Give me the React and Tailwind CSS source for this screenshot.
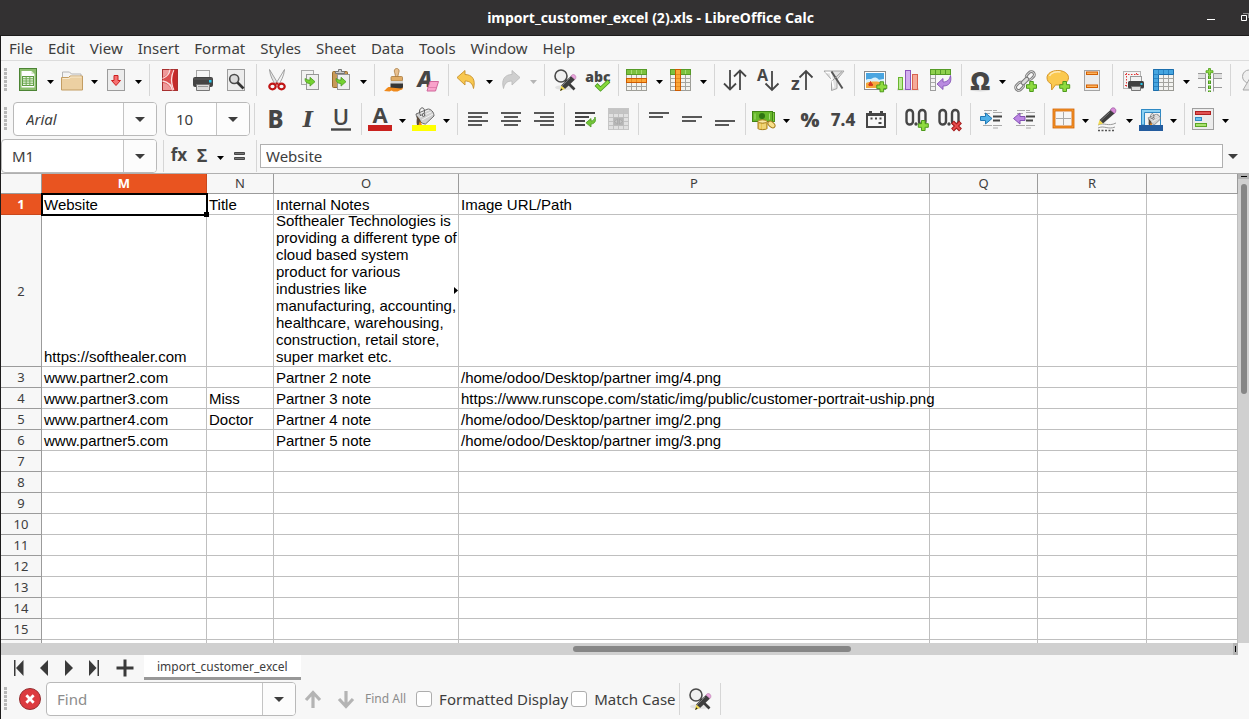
import React from "react";

/* ---------- shared drawing parts ---------- */

function Svg({ children, size = 24, view = "0 0 24 24" }) {
  return (
    <svg width={size} height={size} viewBox={view} fill="none" aria-hidden="true" className="block shrink-0 overflow-visible">
      {children}
    </svg>
  );
}

const INK = "#464646";

function Plus({ x = 18.5, y = 18.5 }) {
  return (
    <g transform={`translate(${x} ${y})`}>
      <path d="M-1.8-5h3.6v3.2h3.2v3.6h-3.2v3.2h-3.6v-3.2h-3.2v-3.6h3.2z" fill="#8fdb3f" stroke="#4d9a1c" />
    </g>
  );
}

function GreenArrow({ x = 0, y = 0 }) {
  return (
    <path
      transform={`translate(${x} ${y})`}
      d="M0 0c0 3.400 1.600 5 5 5v2.600l5-4.400-5-4.400v2.800c-2.200-.1-3.600-.6-5-1.600z"
      fill="#74d130"
      stroke="#4a9a20"
      strokeWidth=".8"
    />
  );
}

function Glyph({ x = 12, y, size, children, italic, weight = 700, family = "Open Sans, Noto Sans, sans-serif" }) {
  return (
    <text x={x} y={y} fontSize={size} fontWeight={weight} fontStyle={italic ? "italic" : "normal"} fontFamily={family} textAnchor="middle" fill={INK}>
      {children}
    </text>
  );
}

function GridLines({ x, y, w, h, cols, rows, color = "#a5a5a0" }) {
  const d = [];
  for (let i = 1; i < cols; i++) d.push(`M${x + (w * i) / cols} ${y}v${h}`);
  for (let i = 1; i < rows; i++) d.push(`M${x} ${y + (h * i) / rows}h${w}`);
  return <path d={d.join("")} stroke={color} />;
}

/* ---------- standard toolbar icons ---------- */

const NewIcon = () => (
  <Svg>
    <rect x="3.5" y=".5" width="17" height="22" fill="#8bbd6d" stroke="#4c8434" />
    <path d="M5.500 3h10l3 3v13.500h-13z" fill="#fff" />
    <path d="M15.500 3v3h3z" fill="#d5e8c8" />
    <rect x="6.500" y="8.500" width="11" height="9" fill="#eaf5e2" stroke="#5e9b42" />
    <GridLines x={6.5} y={8.5} w={11} h={9} cols={3} rows={4} color="#6da851" />
  </Svg>
);
const OpenIcon = () => (
  <Svg>
    <path d="M2.500 20v-16h7l2 2h9.500v14z" fill="#f4f4f4" stroke="#b5b5b5" />
    <path d="M1.500 9.500h7l1.500-1.500h12.500v14h-21z" fill="#ecd0a2" stroke="#c39d63" />
    <path d="M2.500 10.500h7l1-1.500h11" stroke="#f9ebd0" />
  </Svg>
);
const SaveIcon = () => (
  <Svg>
    <rect x="3.500" y="1.500" width="17" height="21" fill="#ececec" stroke="#9c9c9c" />
    <path d="M10 7.500h4v5h2.500l-4.500 5-4.500-5h2.500z" fill="#f57070" stroke="#cc1f1f" />
  </Svg>
);
const PdfIcon = () => (
  <Svg>
    <rect x="4.500" y="1.500" width="15" height="21" fill="#dc5050" stroke="#a83030" />
    <path d="M5 2h6.500c-.5 3-3 5.500-6.500 7z" fill="#ee9a9a" />
    <path d="M5 15c4 0 7 3 8.500 7h-8.500z" fill="#ee9a9a" />
    <path d="M4.500 10.500c5-2 7-5 7.500-9M4.500 13c6 1 9 4 10 9.500M16 2c-3.500 7-3.500 13 0 20" stroke="#fbe0e0" strokeWidth="1.300" />
    <path d="M16.500 2h2.500v20h-2.500c-2.500-6-2.500-14 0-20z" fill="#c42a2a" />
  </Svg>
);
const PrinterIcon = () => (
  <Svg>
    <rect x="5.500" y="2.500" width="13" height="9" fill="#f5f5f5" stroke="#a5a5a5" />
    <rect x="2" y="9" width="20" height="10" rx="2" fill="#444" />
    <path d="M3 11h18" stroke="#5f5f5f" />
    <rect x="18" y="12" width="2.500" height="2.500" fill="#29c8ee" />
    <path d="M5.500 16.500h13v6h-13z" fill="#ddd" stroke="#777" />
    <path d="M7 18.500h10" stroke="#999" />
  </Svg>
);
const PreviewIcon = () => (
  <Svg>
    <rect x="3.500" y="1.500" width="17" height="21" fill="#ececec" stroke="#9c9c9c" />
    <circle cx="10.200" cy="11" r="4.500" fill="#dadada" stroke="#4a4a4a" strokeWidth="1.600" />
    <path d="M13.500 14.500l6 6" stroke="#333" strokeWidth="2.600" />
  </Svg>
);
const CutIcon = () => (
  <Svg>
    <path d="M4.500 1.500l8.500 14-2.500 1.500c-2.500-4-5.500-9-6-15.500z" fill="#e4e4e4" stroke="#8d8d8d" strokeWidth=".8" />
    <path d="M19.500 1.500l-8.500 14 2.500 1.500c2.500-4 5.500-9 6-15.500z" fill="#f4f4f4" stroke="#8d8d8d" strokeWidth=".8" />
    <ellipse cx="7.500" cy="18.500" rx="3.200" ry="2.800" stroke="#c01515" strokeWidth="2.200" />
    <ellipse cx="16.500" cy="18.500" rx="3.200" ry="2.800" stroke="#c01515" strokeWidth="2.200" />
    <path d="M10.500 15.500h3" stroke="#c01515" strokeWidth="2" />
  </Svg>
);
const CopyIcon = () => (
  <Svg>
    <rect x="3.500" y="2.500" width="12" height="14" fill="#f2f2f2" stroke="#a9a9a9" />
    <rect x="8.500" y="6.500" width="12" height="15" fill="#efefef" stroke="#979797" />
    <GreenArrow x={7} y={10.5} />
  </Svg>
);
const PasteIcon = () => (
  <Svg>
    <rect x="3.500" y="3.500" width="15" height="16" rx="1" fill="#c89a58" stroke="#966c2e" />
    <path d="M6.500 5.500v-2h3v-2h3v2h3v2z" fill="#ccc" stroke="#777" />
    <rect x="8.500" y="6.500" width="12" height="15" fill="#efefef" stroke="#979797" />
    <GreenArrow x={7} y={10.5} />
  </Svg>
);
const BrushIcon = () => (
  <Svg>
    <path d="M1 23c2-1 2-3 4.500-4h14c1 1 0 3-2 3l-3 1.500h-4l-2-1-2 1z" fill="#f08a1c" />
    <path d="M12.300 9c.5-2-1-4.500-1-6 0-1.500 1-2.500 2.400-2.500s2.400 1 2.400 2.500c0 1.500-1.500 4-1 6z" fill="#e8c090" stroke="#a8783c" strokeWidth=".8" />
    <rect x="8" y="8.500" width="11.500" height="4.500" rx="1" fill="#e0ac66" stroke="#a8783c" strokeWidth=".8" />
    <rect x="7.500" y="13" width="12.500" height="2.800" fill="#d5d5d5" />
    <path d="M7.500 15.500h12.500v4l-2 1-10.500-1z" fill="#353535" />
  </Svg>
);
const ClearIcon = () => (
  <Svg>
    <Glyph x={9} y={19} size={22} italic weight={800}>A</Glyph>
    <path d="M14 13.500h8.500l-3 9.500h-8.500z" fill="#f9a3cb" stroke="#d0679b" />
    <path d="M11.500 19.500h8.500" stroke="#e27fae" />
  </Svg>
);
const UndoIcon = () => (
  <Svg>
    <path d="M2 9.500l8-7v4c7 0 11 5 8.500 14-1-5-3.500-7.500-8.500-7.500v4z" fill="#f8c850" stroke="#c7912a" strokeWidth=".9" />
  </Svg>
);
const RedoIcon = () => (
  <Svg>
    <path d="M21 9.500l-8-7v4c-7 0-11 5-8.500 14 1-5 3.500-7.500 8.500-7.500v4z" fill="#cfcfcf" stroke="#bcbcbc" strokeWidth=".9" />
  </Svg>
);
const FindReplaceIcon = () => (
  <Svg>
    <ellipse cx="12" cy="19.500" rx="10" ry="2.500" fill="#e2e2e2" />
    <circle cx="8" cy="8" r="6" fill="#f0f0f0" stroke="#4a4a4a" strokeWidth="1.600" />
    <path d="M12.500 12.500l9 9" stroke="#3b3b3b" strokeWidth="2.600" />
    <path d="M18 8l4 3.500-10 9.500-4-3.500z" fill="#3e3e3e" />
    <path d="M17 10l-8 8" stroke="#777" />
    <path d="M8.200 17.500l3.800 3.500-5 2z" fill="#f0d84c" />
    <path d="M7 23l1.200-2.800 1.500 1.600z" fill="#222" />
    <path d="M18 8c1-1.500 2.500-2 4-.8 1.200 1.200 1.200 3 0 4.300z" fill="#eaa4dd" stroke="#b573a8" strokeWidth=".6" />
  </Svg>
);
const SpellIcon = () => (
  <Svg>
    <Glyph x={12} y={14} size={14} weight={800}>abc</Glyph>
    <path d="M10 16.500l4.500 4.500 8.500-8" stroke="#4a9a20" strokeWidth="4" />
    <path d="M10.500 17l4 4 8-7.500" stroke="#86d93a" strokeWidth="2.400" />
  </Svg>
);
const RowIcon = () => (
  <Svg>
    <rect x="1.500" y="1.500" width="20" height="21" fill="#f3f3ef" stroke="#9e9e98" />
    <GridLines x={1.5} y={6.5} w={20} h={16} cols={4} rows={4} />
    <rect x="1.500" y="1.500" width="20" height="5" fill="#7cc13e" stroke="#569b27" />
    <path d="M6.500 2v4M11.500 2v4M16.500 2v4" stroke="#a5dc74" />
    <rect x="1.500" y="10.500" width="20" height="4" fill="#fca637" stroke="#cf5c00" />
    <path d="M6.500 11v3M11.500 11v3M16.500 11v3" stroke="#e58a20" />
  </Svg>
);
const ColumnIcon = () => (
  <Svg>
    <rect x="1.500" y="1.500" width="20" height="21" fill="#f3f3ef" stroke="#9e9e98" />
    <GridLines x={1.5} y={6.5} w={20} h={16} cols={4} rows={4} />
    <rect x="1.500" y="1.500" width="20" height="5" fill="#7cc13e" stroke="#569b27" />
    <path d="M16.500 2v4" stroke="#a5dc74" />
    <rect x="6.500" y="1.500" width="5" height="21" fill="#fca637" stroke="#cf5c00" />
    <path d="M7 6.500h4M7 10.500h4M7 14.500h4M7 18.500h4" stroke="#e58a20" />
  </Svg>
);
const SortIcon = () => (
  <Svg>
    <path d="M7 2v19M1 15.500l6 6 6-6M17 22v-19M11 8.500l6-6 6 6" stroke={INK} strokeWidth="1.800" />
  </Svg>
);
const SortAscIcon = () => (
  <Svg>
    <Glyph x={6.5} y={12.5} size={16}>A</Glyph>
    <path d="M16 3v19M9.500 15.500l6.500 6.500 6.500-6.500" stroke={INK} strokeWidth="1.800" />
  </Svg>
);
const SortDescIcon = () => (
  <Svg>
    <Glyph x={6.5} y={21.5} size={18}>z</Glyph>
    <path d="M17 22v-19M10.500 9.500l6.500-6.500 6.500 6.500" stroke={INK} strokeWidth="1.800" />
  </Svg>
);
const FilterIcon = () => (
  <Svg>
    <path d="M2 3h20l-7 8.500v9l-5.500 2v-11z" fill="#e3e3e3" stroke="#a6a6a6" />
    <path d="M3.500 4.500h5l3 15" stroke="#fff" strokeWidth="1.600" />
    <path d="M9.500 3.500l11 17" stroke="#555" strokeWidth="2" />
    <path d="M20 3.500l-9.500 9" stroke="#999" />
  </Svg>
);
const ImageIcon = () => (
  <Svg>
    <rect x="1.500" y="3.500" width="21" height="18" fill="#fff" stroke="#8b8b8b" />
    <rect x="3" y="5" width="18" height="15" fill="#4aa5e0" />
    <path d="M3 12c2-2 4 0 6-1.500s5-1 6 .5 4 0 6 0v4h-18z" fill="#d8f0fb" />
    <path d="M3 15c5-2 12-2 18 0v5h-18z" fill="#f4a83c" />
    <path d="M7.500 13.500l1.500 3h-3zM6 16h3.500v1.500h-3.500z" fill="#d93a1c" stroke="#d93a1c" />
    <Plus x={18.8} y={18.8} />
  </Svg>
);
const ChartIcon = () => (
  <Svg>
    <path d="M1 21.500h22" stroke="#d8d8d8" strokeWidth="2" />
    <rect x="2.500" y="9.500" width="4" height="12" fill="#bdea97" stroke="#69b52f" />
    <rect x="9.500" y="2.500" width="5" height="19" fill="#d2aeee" stroke="#8d55bd" />
    <rect x="16.500" y="6.500" width="5" height="15" fill="#f5aa9a" stroke="#d9634f" />
  </Svg>
);
const PivotIcon = () => (
  <Svg>
    <rect x="1.500" y="6.500" width="5" height="16" fill="#f3f3f3" stroke="#9e9e9e" />
    <path d="M2 10.500h4M2 14.500h4M2 18.500h4" stroke="#aaa" />
    <rect x="1.500" y="1.500" width="20" height="5" fill="#8fd14e" stroke="#569b27" />
    <path d="M6.500 2v4M11.500 2v4M16.500 2v4" stroke="#569b27" />
    <path d="M21.500 7.500c1.500 7-1.500 10.500-7.500 10.500v3.500l-6-5.500 6-5.500v3.500c4 0 6.500-2 7.500-6.500z" fill="#b98be0" stroke="#8553b5" strokeWidth=".9" />
  </Svg>
);
const OmegaIcon = () => (
  <Svg>
    <ellipse cx="12" cy="22" rx="10" ry="1.500" fill="#dcdcdc" />
    <Glyph x={12.3} y={22} size={25} weight={800}>Ω</Glyph>
  </Svg>
);
const LinkIcon = () => (
  <Svg>
    <g transform="rotate(-45 11 13)">
      <rect x="-1" y="10" width="9" height="6" rx="3" stroke="#777" strokeWidth="2.800" />
      <rect x="-1" y="10" width="9" height="6" rx="3" stroke="#d5d5d5" />
      <rect x="14" y="10" width="9" height="6" rx="3" stroke="#777" strokeWidth="2.800" />
      <rect x="14" y="10" width="9" height="6" rx="3" stroke="#d5d5d5" />
      <rect x="6.500" y="11" width="9" height="4" rx="2" fill="#ddd" stroke="#777" />
    </g>
    <Plus x={17.5} y={18.5} />
  </Svg>
);
const CommentIcon = () => (
  <Svg>
    <path d="M10.800 2.500c6 0 10.700 3 10.700 7.200 0 4.300-4.700 7.300-10.700 7.300l-2.300-.1-3.800 5.100-.3-6c-2.700-1.200-4.400-3.500-4.400-6.300 0-4.200 4.800-7.200 10.800-7.200z" fill="#fbc94f" stroke="#d4962a" />
    <path d="M2.500 8c1.500-3.500 7-5 11-4" stroke="#fdeab8" strokeWidth="1.500" />
    <Plus x={17.7} y={18.5} />
  </Svg>
);
const HeaderFooterIcon = () => (
  <Svg>
    <rect x="4.500" y="2.500" width="15" height="20" fill="#ebebeb" stroke="#a3a3a3" />
    <rect x="6.500" y="4" width="11" height="2.500" fill="#fdb35c" stroke="#d35f00" />
    <rect x="6.500" y="17" width="11" height="2.500" fill="#fdb35c" stroke="#d35f00" />
  </Svg>
);
const PrintAreaIcon = () => (
  <Svg>
    <rect x="2.500" y="3.500" width="17" height="17" fill="#f4f4f4" stroke="#b3b3b3" />
    <path d="M4 6.500h14M5.500 5v15M15.500 5v7M4 17.500h4" stroke="#e23636" strokeDasharray="1.500 1.500" />
    <rect x="9.500" y="8.500" width="11" height="6" fill="#f3f3f3" stroke="#999" />
    <rect x="7" y="13" width="16" height="7.500" rx="1.500" fill="#404040" />
    <rect x="19.500" y="15" width="2" height="2" fill="#29c8ee" />
    <path d="M10.500 18.500h9v4h-9z" fill="#ddd" stroke="#777" />
  </Svg>
);
const FreezeIcon = () => (
  <Svg>
    <rect x="1.500" y="1.500" width="20" height="21" fill="#f4f4f1" stroke="#9a9a94" />
    <GridLines x={6.5} y={6.5} w={15} h={16} cols={3} rows={4} />
    <path d="M1.500 1.500h20v5h-15v16h-5z" fill="#46a6e0" stroke="#1b6fae" />
    <path d="M6.500 2v4M11.500 2v4M16.500 2v4M2 6.500h4M2 10.500h4M2 14.500h4M2 18.500h4" stroke="#2b83c2" />
  </Svg>
);
const SplitIcon = () => (
  <Svg>
    <path d="M0 6h7v4h-7zM16 6h8v4h-8z" fill="#e0e0e0" />
    <path d="M0 5.500h7.500v18M24 5.500h-8.500v18M7.500 10.500h-7.500M15.500 10.500h8.500M0 19.500h7M16 19.500h8" stroke="#999" />
    <path d="M11.500 7.500v16.500" stroke="#4a9a20" strokeWidth="3" strokeDasharray="3.500 1.500" />
    <path d="M11.500 8v16" stroke="#8bd548" strokeDasharray="2.500 2.500" />
    <path d="M10.500.5h2v2.200h2.500v2h-2.500v2.300h-2v-2.300h-2.500v-2h2.500z" fill="#8fdb3f" stroke="#4d9a1c" strokeWidth=".8" />
  </Svg>
);
const ShapesIcon = () => (
  <Svg>
    <circle cx="10" cy="8.500" r="6.500" fill="#efefef" stroke="#a8a8a8" />
    <path d="M4 22l7-12 7 12z" fill="#e6e6e6" stroke="#a8a8a8" />
  </Svg>
);

/* ---------- formatting toolbar icons ---------- */

const BoldIcon = () => <Svg><Glyph x={12.5} y={21} size={24} weight={800} family="Noto Sans, sans-serif">B</Glyph></Svg>;
const ItalicIcon = () => <Svg><Glyph y={20} size={22} italic family="DejaVu Serif, serif" weight={700}>I</Glyph></Svg>;
const UnderlineIcon = () => (
  <Svg>
    <Glyph y={18} size={22} weight={600}>U</Glyph>
    <path d="M2 22.500h20" stroke={INK} strokeWidth="2.400" />
  </Svg>
);
const FontColorIcon = () => (
  <Svg>
    <Glyph y={16} size={22}>A</Glyph>
    <path d="M0 18h24v6h-24z" fill="#c9211e" />
  </Svg>
);
const Bucket = () => (
  <g>
    <path d="M4 7l12-5c3 0 6 3 6 7l-8.500 8c-4 0-9-5-9.500-10z" fill="#cfcfcf" stroke="#6b6b6b" />
    <path d="M7 7l10-4M8 10l11-5M10 13l11-6" stroke="#f4f4f4" />
    <path d="M9 9c-3-4-1-9 2-8 2 1 2 5 0 7" stroke="#555" />
    <circle cx="11.500" cy="8" r="1.400" fill="#eee" stroke="#555" />
    <path d="M5 9c2 2 5 5 4 9h-4c-1-3 0-6 0-9z" fill="#5b4a3a" />
    <path d="M6.500 18l1.500-4 2 4z" fill="#f08a1c" />
  </g>
);
const HighlightIcon = () => (
  <Svg>
    <Bucket />
    <path d="M0 18h24v6h-24z" fill="#ffff00" />
  </Svg>
);
function Lines({ rows }) {
  return (
    <Svg>
      {rows.map(([x, y, w]) => (
        <path key={y} d={`M${x} ${y}h${w}`} stroke={INK} strokeWidth="1.800" />
      ))}
    </Svg>
  );
}
const AlignLeftIcon = () => <Lines rows={[[2, 6, 20], [2, 10, 14], [2, 14, 20], [2, 18, 14]]} />;
const AlignCenterIcon = () => <Lines rows={[[2, 6, 20], [5, 10, 14], [2, 14, 20], [5, 18, 14]]} />;
const AlignRightIcon = () => <Lines rows={[[2, 6, 20], [8, 10, 14], [2, 14, 20], [8, 18, 14]]} />;
const AlignTopIcon = () => <Lines rows={[[2, 6, 20], [2, 10, 14]]} />;
const AlignMiddleIcon = () => <Lines rows={[[2, 10, 20], [2, 14, 14]]} />;
const AlignBottomIcon = () => <Lines rows={[[2, 14, 20], [2, 18, 14]]} />;
const WrapIcon = () => (
  <Svg>
    <path d="M2 6h20M2 10h14M2 14h10M2 18h10" stroke={INK} strokeWidth="1.800" />
    <path d="M22 10c1.500 4-.5 7-4 7v3l-5-4.200 5-4.300v2.500c2 0 3.500-1.500 4-4z" fill="#74c53a" stroke="#4a9a20" strokeWidth=".8" />
  </Svg>
);
const MergeIcon = () => (
  <Svg>
    <rect x="2.500" y="1.500" width="20" height="21" fill="#e0e0e0" stroke="#c6c6c6" />
    <path d="M3 2h19v4h-19z" fill="#c4c4c4" />
    <GridLines x={2.5} y={2.5} w={20} h={20} cols={4} rows={5} color="#c2c2c2" />
    <rect x="7.500" y="10.500" width="10" height="8" fill="#b5b5b5" />
    <path d="M11.500 12v5l-3-2.500zM13.500 12v5l3-2.500z" fill="#c6c6c6" stroke="#a2a2a2" strokeWidth=".6" />
  </Svg>
);
const MoneyIcon = () => (
  <Svg>
    <rect x="3.500" y="5.500" width="19" height="9" fill="#7fcd3e" stroke="#4a8f1c" />
    <rect x=".5" y="4.500" width="20" height="10" fill="#66b82a" stroke="#428517" />
    <circle cx="10" cy="9" r="3" fill="#2f7512" />
    <path d="M3 6.500v6M17.500 6.500v6" stroke="#a6df77" />
    <ellipse cx="19.500" cy="17.500" rx="4" ry="2.600" transform="rotate(40 19.500 17.500)" fill="#f8e08a" stroke="#a67c1c" />
    <path d="M6 14.500v7c0 1.500 9 1.500 9 0v-7z" fill="#e9c34f" stroke="#a67c1c" />
    <ellipse cx="10.500" cy="14.500" rx="4.500" ry="1.700" fill="#fbeaa6" stroke="#a67c1c" />
    <path d="M8 16.500v5M11 17v5M13 16.500v5" stroke="#f8e59b" />
  </Svg>
);
const PercentIcon = () => <Svg><Glyph y={20} size={20} weight={800}>%</Glyph></Svg>;
const NumberIcon = () => <Svg><Glyph y={19} size={17} weight={800} family="Noto Sans, sans-serif">7.4</Glyph></Svg>;
const DateIcon = () => (
  <Svg>
    <path d="M2 6h3v-2h3v2h8v-2h3v2h3v15h-20z" fill={INK} />
    <rect x="4" y="9" width="16" height="10" fill="#f7f7f7" />
    <path d="M6.500 11.500h2M11 11.500h2M15.500 11.500h2M6.500 15.500M14.500 16h3" stroke={INK} strokeWidth="2" />
  </Svg>
);
const Decimal = ({ children }) => (
  <Svg>
    <rect x="1.500" y="3" width="6.500" height="14.500" rx="3.200" stroke={INK} strokeWidth="2.400" />
    <circle cx="11" cy="17" r="1.700" fill={INK} />
    <rect x="14" y="3" width="6.500" height="14.500" rx="3.200" stroke={INK} strokeWidth="2.400" />
    {children}
  </Svg>
);
const AddDecimalIcon = () => <Decimal><Plus x={18.3} y={18.5} /></Decimal>;
const DelDecimalIcon = () => (
  <Decimal>
    <path d="M14.500 15l8 8M22.500 15l-8 8" stroke="#a31818" strokeWidth="4" />
    <path d="M15 15.500l7 7M22 15.500l-7 7" stroke="#e64b4b" strokeWidth="2" />
  </Decimal>
);
const IndentIcon = () => (
  <Svg>
    <path d="M5 3.500h8M14 3.500h4M5 6.500h6M14 5.500h9M4 18.500h9M14 18.500h9M14 21h5" stroke="#aaa" />
    <path d="M14 9.500h9M14 13.500h7" stroke={INK} strokeWidth="2" />
    <path d="M1.500 9.500h5v-3.500l6.500 5.500-6.500 5.500v-3.500h-5z" fill="#51b1e8" stroke="#1f78b5" />
  </Svg>
);
const OutdentIcon = () => (
  <Svg>
    <path d="M5 3.500h8M14 3.500h4M5 6.500h6M14 5.500h9M4 18.500h9M14 18.500h9M14 21h5" stroke="#aaa" />
    <path d="M14 9.500h9M14 13.500h7" stroke={INK} strokeWidth="2" />
    <path d="M13 9.500h-5v-3.500l-6.500 5.500 6.500 5.500v-3.500h5z" fill="#bd86e4" stroke="#8350b3" />
  </Svg>
);
const BorderIcon = () => (
  <Svg>
    <rect x="3" y="3" width="19" height="17" fill="#f6f6f6" stroke="#d35f00" strokeWidth="2.800" />
    <rect x="3" y="3" width="19" height="17" stroke="#fca637" />
    <path d="M12.500 5v13M5 11.500h15" stroke="#aaa" />
  </Svg>
);
const BorderStyleIcon = () => (
  <Svg>
    <path d="M3 18c6-3 10 2 18-2M3 21c6-3 10 2 17-1" stroke="#999" />
    <path d="M3 23.500h16" stroke="#555" strokeWidth="1.500" strokeDasharray="2 1.500" />
    <path d="M15.500 3l4 3.500-11.500 10-3.500-3.500z" fill="#3f3f3f" />
    <path d="M14.500 5.500l-8.500 8" stroke="#777" />
    <path d="M4.500 13l3.500 3.500-5 1.500z" fill="#f0d84c" />
    <path d="M15.500 3c.8-2 2.500-3 4.500-1.500 1.500 1.500 1 3.500-.5 5z" fill="#d98ad8" stroke="#92519a" strokeWidth=".7" />
  </Svg>
);
const BorderColorIcon = () => (
  <Svg>
    <path d="M2.500 18v-15.500h19v15.500" fill="#f3f3f3" stroke="#2f89c4" />
    <path d="M2.500 2.500h19v3h-16v12.500h-3z" fill="#8bd0f2" stroke="#2f89c4" />
    <g transform="translate(6.500 6) scale(.68)"><Bucket /></g>
    <path d="M0 18h24v6h-24z" fill="#245c9e" />
  </Svg>
);
const ConditionalIcon = () => (
  <Svg>
    <rect x="1.500" y="1.500" width="21" height="21" fill="#ececec" stroke="#9f9f9f" />
    <rect x="4.500" y="4.500" width="15" height="3" fill="#e05252" stroke="#b02020" />
    <rect x="4.500" y="10.500" width="6" height="3" fill="#6dc0ec" stroke="#2f89c4" />
    <rect x="4.500" y="16.500" width="11" height="3" fill="#a8e26c" stroke="#5ca528" />
  </Svg>
);

/* ---------- toolbar widgets ---------- */

function Caret({ muted, large }) {
  return (
    <svg width={large ? 10 : 7} height={large ? 5 : 4} viewBox="0 0 10 5" preserveAspectRatio="none" aria-hidden="true" className="block">
      <path d="M0 0h10l-5 5z" fill={muted ? "#b5b5b5" : large ? "#3d3d3d" : "#000"} />
    </svg>
  );
}

function Tool({ label, icon: Icon, disabled }) {
  return (
    <button type="button" aria-label={label} disabled={disabled} className="flex h-8 w-[33px] shrink-0 items-center justify-center">
      <Icon />
    </button>
  );
}

function SplitTool({ label, icon: Icon, disabled }) {
  return (
    <div className="flex h-8 w-11 shrink-0">
      <button type="button" aria-label={label} disabled={disabled} className="flex w-[30px] items-center justify-center">
        <Icon />
      </button>
      <button type="button" aria-label={`${label} options`} disabled={disabled} className="flex w-3.5 items-center justify-center pt-1">
        <Caret muted={disabled} />
      </button>
    </div>
  );
}

function Sep() {
  return (
    <div className="flex h-8 w-2 shrink-0 justify-center">
      <div className="w-px bg-[#d6d6d6]" />
    </div>
  );
}

function Grip() {
  return (
    <div className="ml-[3px] h-6 w-[3px] shrink-0 bg-[repeating-linear-gradient(#b8b8b8_0_3px,transparent_3px_4px)]" />
  );
}

function renderTools(tools) {
  return tools.map((t, i) => {
    if (t === "|") return <Sep key={i} />;
    const [kind, label, icon, disabled] = t;
    const Kind = kind === "s" ? SplitTool : Tool;
    return <Kind key={i} label={label} icon={icon} disabled={disabled} />;
  });
}

const standardTools = [
  ["s", "New", NewIcon], ["s", "Open", OpenIcon], ["s", "Save", SaveIcon], "|",
  ["p", "Export as PDF", PdfIcon], ["p", "Print", PrinterIcon], ["p", "Print Preview", PreviewIcon], "|",
  ["p", "Cut", CutIcon], ["p", "Copy", CopyIcon], ["s", "Paste", PasteIcon], "|",
  ["p", "Clone Formatting", BrushIcon], ["p", "Clear Formatting", ClearIcon], "|",
  ["s", "Undo", UndoIcon], ["s", "Redo", RedoIcon, true], "|",
  ["p", "Find and Replace", FindReplaceIcon], ["p", "Spelling", SpellIcon], "|",
  ["s", "Row", RowIcon], ["s", "Column", ColumnIcon], "|",
  ["p", "Sort", SortIcon], ["p", "Sort Ascending", SortAscIcon], ["p", "Sort Descending", SortDescIcon], ["p", "AutoFilter", FilterIcon], "|",
  ["p", "Insert Image", ImageIcon], ["p", "Insert Chart", ChartIcon], ["p", "Pivot Table", PivotIcon], "|",
  ["s", "Special Character", OmegaIcon], ["p", "Hyperlink", LinkIcon], ["p", "Comment", CommentIcon], ["p", "Headers and Footers", HeaderFooterIcon], "|",
  ["p", "Print Area", PrintAreaIcon], ["s", "Freeze", FreezeIcon], ["p", "Split Window", SplitIcon], "|",
  ["p", "Draw Functions", ShapesIcon],
];

const formatTools = [
  "|", ["p", "Bold", BoldIcon], ["p", "Italic", ItalicIcon], ["p", "Underline", UnderlineIcon], "|",
  ["s", "Font Color", FontColorIcon], ["s", "Background Color", HighlightIcon], "|",
  ["p", "Align Left", AlignLeftIcon], ["p", "Center", AlignCenterIcon], ["p", "Align Right", AlignRightIcon], "|",
  ["p", "Wrap Text", WrapIcon], ["p", "Merge Cells", MergeIcon, true], "|",
  ["p", "Align Top", AlignTopIcon], ["p", "Center Vertically", AlignMiddleIcon], ["p", "Align Bottom", AlignBottomIcon], "|",
  ["s", "Currency", MoneyIcon], ["p", "Percent", PercentIcon], ["p", "Number", NumberIcon], ["p", "Date", DateIcon], "|",
  ["p", "Add Decimal Place", AddDecimalIcon], ["p", "Delete Decimal Place", DelDecimalIcon], "|",
  ["p", "Increase Indent", IndentIcon], ["p", "Decrease Indent", OutdentIcon], "|",
  ["s", "Borders", BorderIcon], ["s", "Border Style", BorderStyleIcon], ["s", "Border Color", BorderColorIcon], "|",
  ["s", "Conditional", ConditionalIcon],
];

function Combo({ label, value, placeholder, className, inputClass = "" }) {
  return (
    <div className={`flex h-[34px] shrink-0 overflow-hidden rounded border border-[#b9b9b9] bg-white ${className}`}>
      <input
        aria-label={label}
        defaultValue={value}
        placeholder={placeholder}
        className={`min-w-0 flex-1 bg-transparent text-[15px] text-[#3d3d3d] outline-none placeholder:text-[#8c8c8c] ${inputClass}`}
      />
      <button type="button" aria-label={`${label} list`} className="flex w-[33px] items-center justify-center border-l border-[#c4c4c4] bg-[#fcfcfc]">
        <Caret large />
      </button>
    </div>
  );
}

/* ---------- sheet ---------- */

const menus = ["File", "Edit", "View", "Insert", "Format", "Styles", "Sheet", "Data", "Tools", "Window", "Help"];
const columns = ["M", "N", "O", "P", "Q", "R", ""];

const notes =
  "Softhealer Technologies is providing a different type of cloud based system product for various industries like manufacturing, accounting, healthcare, warehousing, construction, retail store, super market etc.";

const data = [
  ["Website", "Title", "Internal Notes", "Image URL/Path"],
  ["https://softhealer.com", "", notes, ""],
  ["www.partner2.com", "", "Partner 2 note", "/home/odoo/Desktop/partner img/4.png"],
  ["www.partner3.com", "Miss", "Partner 3 note", "https://www.runscope.com/static/img/public/customer-portrait-uship.png"],
  ["www.partner4.com", "Doctor", "Partner 4 note", "/home/odoo/Desktop/partner img/2.png"],
  ["www.partner5.com", "", "Partner 5 note", "/home/odoo/Desktop/partner img/3.png"],
];
const rows = Array.from({ length: 16 }, (_, i) => data[i] || []);

function Sheet() {
  return (
    <table className="w-full table-fixed border-separate border-spacing-0">
      <colgroup>
        <col className="w-[41px]" />
        <col className="w-[165px]" />
        <col className="w-[67px]" />
        <col className="w-[185px]" />
        <col className="w-[471px]" />
        <col className="w-[108px]" />
        <col className="w-[109px]" />
        <col />
      </colgroup>
      <thead>
        <tr className="h-5">
          <td className="border-r border-b border-[#9b9b9b] bg-[#f7f7f7] p-0" />
          {columns.map((c, i) => (
            <th
              key={i}
              scope="col"
              className={`border-r border-b p-0 text-[13px] leading-[19px] ${
                i === 0 ? "border-[#c9481d] bg-[#e95420] font-bold text-white" : "border-[#9b9b9b] bg-[#f7f7f7] font-normal text-[#3d3d3d]"
              }`}
            >
              {c}
            </th>
          ))}
        </tr>
      </thead>
      <tbody className="font-['Liberation_Sans',Arial,sans-serif] text-[15px] leading-[17px] text-black">
        {rows.map((row, r) => (
          <tr key={r} className={r === 1 ? "h-[152px]" : "h-[21px]"}>
            <th
              scope="row"
              className={`border-r border-b p-0 font-['Noto_Sans',sans-serif] text-[13px] leading-5 ${
                r === 0 ? "border-[#c9481d] bg-[#e95420] font-bold text-white" : "border-[#9b9b9b] bg-[#f7f7f7] font-normal text-[#3d3d3d]"
              }`}
            >
              {r + 1}
            </th>
            {columns.map((_, c) => {
              const text = row[c];
              const active = r === 0 && c === 0;
              return (
                <td
                  key={c}
                  className={`relative border-r border-b border-[#bfbfbf] py-0 pl-0.5 align-bottom ${
                    active ? "outline-2 -outline-offset-1 outline-black" : ""
                  }`}
                >
                  {r === 1 && c === 2 ? (
                    <>
                      <div className="flex h-[151px] items-end pb-px">{text}</div>
                      <svg width="4" height="7" viewBox="0 0 4 7" aria-hidden="true" className="absolute top-[72px] right-0">
                        <path d="M0 0v7l4-3.500z" fill="#000" />
                      </svg>
                    </>
                  ) : (
                    <div className="whitespace-nowrap pb-px">{text}</div>
                  )}
                  {active && <span className="absolute -right-[3px] -bottom-[3px] z-10 size-[5px] bg-black" />}
                </td>
              );
            })}
          </tr>
        ))}
      </tbody>
    </table>
  );
}

function NavButton({ label, d }) {
  return (
    <button type="button" aria-label={label} className="flex h-6 w-[25px] items-center justify-center">
      <svg width="24" height="24" viewBox="0 0 24 24" aria-hidden="true">
        <path d={d} fill="#3a3a3a" />
      </svg>
    </button>
  );
}

function FindArrow({ label, d }) {
  return (
    <button type="button" aria-label={label} disabled className="flex h-8 w-[33px] shrink-0 items-center justify-center">
      <Svg>
        <path d={d} stroke="#b4b4b4" strokeWidth="3.200" />
      </Svg>
    </button>
  );
}

/* ---------- window ---------- */

export default function App() {
  return (
    <div className="flex h-screen w-full flex-col overflow-hidden bg-[#f7f7f7] font-['Noto_Sans',sans-serif] text-[15px] text-[#3d3d3d]">
      <header className="flex h-9 shrink-0 items-center border-b border-[#1d1c1c] bg-[#333132] pl-24 text-white">
        <h1 className="flex-1 text-center text-sm font-bold">import_customer_excel (2).xls - LibreOffice Calc</h1>
        <div className="flex shrink-0 items-center gap-6">
          <button type="button" aria-label="Minimize" className="flex h-6 w-3 items-center justify-center pt-1">
            <span className="h-px w-2 bg-white" />
          </button>
          <button type="button" aria-label="Restore" className="flex h-6 w-2 items-center">
            <svg width="8" height="9" viewBox="0 0 8 9" aria-hidden="true" className="block">
              <path d="M2 .5h6M7.500 0v5" fill="none" stroke="#8c8b8b" />
              <path d="M.5 2.500h5v5h-5z" fill="none" stroke="#fff" />
            </svg>
          </button>
        </div>
      </header>

      <div className="flex min-h-0 flex-1 flex-col border-l border-[#1d1c1c]">
        <nav className="flex h-[25px] shrink-0 items-center gap-[15px] border-b border-[#dcdcdc] pl-2">
          {menus.map((m) => (
            <button key={m} type="button" className="leading-6">
              {m}
            </button>
          ))}
        </nav>

        <div className="flex h-[38px] shrink-0 items-center overflow-hidden">
          <Grip />
          <div className="ml-[6px] flex items-center">{renderTools(standardTools)}</div>
        </div>

        <div className="flex h-10 shrink-0 items-center overflow-hidden">
          <Grip />
          <Combo label="Font Name" value="Arial" className="ml-[6px] w-36" inputClass="pl-3 italic" />
          <Combo label="Font Size" value="10" className="ml-2 w-[85px]" inputClass="pl-2.5" />
          {renderTools(formatTools)}
        </div>

        <div className="flex h-[34px] shrink-0 items-center">
          <Combo label="Name Box" value="M1" className="w-[156px]" inputClass="pl-2.5" />
          <div className="ml-0.5 flex items-center">
            <Sep />
            <button type="button" aria-label="Function Wizard" className="flex h-8 w-6 items-center justify-center">
              <Svg size={20} view="0 0 20 20">
                <Glyph x={10} y={15} size={17}>fx</Glyph>
              </Svg>
            </button>
            <button type="button" aria-label="Select Function" className="flex h-8 w-[22px] items-center justify-center">
              <Svg size={20} view="0 0 20 20">
                <Glyph x={10} y={16} size={18}>Σ</Glyph>
              </Svg>
            </button>
            <button type="button" aria-label="Select Function options" className="flex h-8 w-3.5 items-center justify-center pt-1">
              <Caret />
            </button>
            <button type="button" aria-label="Formula" className="flex h-8 w-[25px] items-center justify-center">
              <svg width="11" height="9" viewBox="0 0 11 9" aria-hidden="true">
                <path d="M.5.5h10v2h-10zM.5 5.500h10v2h-10z" fill="#777" stroke={INK} />
              </svg>
            </button>
            <Sep />
          </div>
          <input
            aria-label="Input line"
            defaultValue="Website"
            className="h-6 min-w-0 flex-1 border border-[#b0b0b0] bg-white px-[5px] text-[15px] text-[#3d3d3d] outline-none"
          />
          <button type="button" aria-label="Expand Formula Bar" className="flex h-6 w-[26px] items-center justify-center pr-1.5">
            <Caret large />
          </button>
        </div>

        <main className="flex min-h-0 flex-1 border-t border-[#b0b0b0]">
          <div className="flex min-w-0 flex-1 flex-col">
            <div className="min-h-0 flex-1 overflow-hidden bg-white">
              <Sheet />
            </div>
            <div className="flex h-3 shrink-0 items-center bg-[#d0d0d0]">
              <div className="flex h-full flex-1 items-center">
                <div className="ml-[46.4%] h-1.5 w-[278px] rounded-full bg-[#868686]" />
              </div>
              <div className="flex h-full w-[5px] items-center justify-center bg-[#b3b3b3]">
                <div className="h-1.5 w-px bg-black" />
              </div>
            </div>
          </div>
          <div className="mb-3 flex w-[11px] shrink-0 flex-col items-center bg-[#d0d0d0]">
            <div className="flex h-[5px] w-full items-center justify-center bg-[#b3b3b3]">
              <div className="h-px w-1.5 bg-black" />
            </div>
            <div className="mt-[5px] h-[210px] w-1.5 rounded-full bg-[#868686]" />
          </div>
        </main>

        <div className="flex h-[25px] shrink-0 items-center pl-[5px]">
          <NavButton label="First sheet" d="M7 4h1.500v16h-1.500zM16.500 4v16l-7.500-8z" />
          <NavButton label="Previous sheet" d="M16 4v16l-8-8z" />
          <NavButton label="Next sheet" d="M8 4v16l8-8z" />
          <NavButton label="Last sheet" d="M7 4v16l7.500-8zM15.500 4h1.500v16h-1.500z" />
          <div className="mr-[7px] ml-1.5 flex">
            <NavButton label="Add sheet" d="M10.500 3.500h3v7h7v3h-7v7h-3v-7h-7v-3h7z" />
          </div>
          <button type="button" className="h-full border-b-[3px] border-[#989898] bg-white px-[13px] pt-0.5 text-xs">
            import_customer_excel
          </button>
        </div>

        <div className="flex h-[39px] shrink-0 items-center pb-px">
          <Grip />
          <button type="button" aria-label="Close Find Bar" className="ml-3 flex h-6 w-[22px] items-center justify-center">
            <Svg size={22}>
              <circle cx="12" cy="12" r="11.500" fill="#dc3b40" stroke="#8f2a2c" />
              <path d="M8 8l8 8M16 8l-8 8" stroke="#fff" strokeWidth="3" />
            </Svg>
          </button>
          <Combo label="Find" placeholder="Find" className="ml-[5px] w-[250px]" inputClass="pl-2.5" />
          <FindArrow label="Find Previous" d="M12 21v-15M5 13l7-7.500 7 7.500" />
          <FindArrow label="Find Next" d="M12 4v15M5 12l7 7.500 7-7.500" />
          <button type="button" disabled className="px-[3px] text-xs text-[#8c8c8c]">
            Find All
          </button>
          <label className="ml-[7px] flex items-center gap-[7px] whitespace-nowrap">
            <input type="checkbox" className="size-4 appearance-none rounded-[3px] border border-[#adadad] bg-white" />
            Formatted Display
          </label>
          <label className="ml-[3px] flex items-center gap-[7px] whitespace-nowrap">
            <input type="checkbox" className="size-4 appearance-none rounded-[3px] border border-[#adadad] bg-white" />
            Match Case
          </label>
          <div className="flex items-center">
            <Sep />
            <Tool label="Find and Replace" icon={FindReplaceIcon} />
            <Sep />
          </div>
        </div>
      </div>
    </div>
  );
}
